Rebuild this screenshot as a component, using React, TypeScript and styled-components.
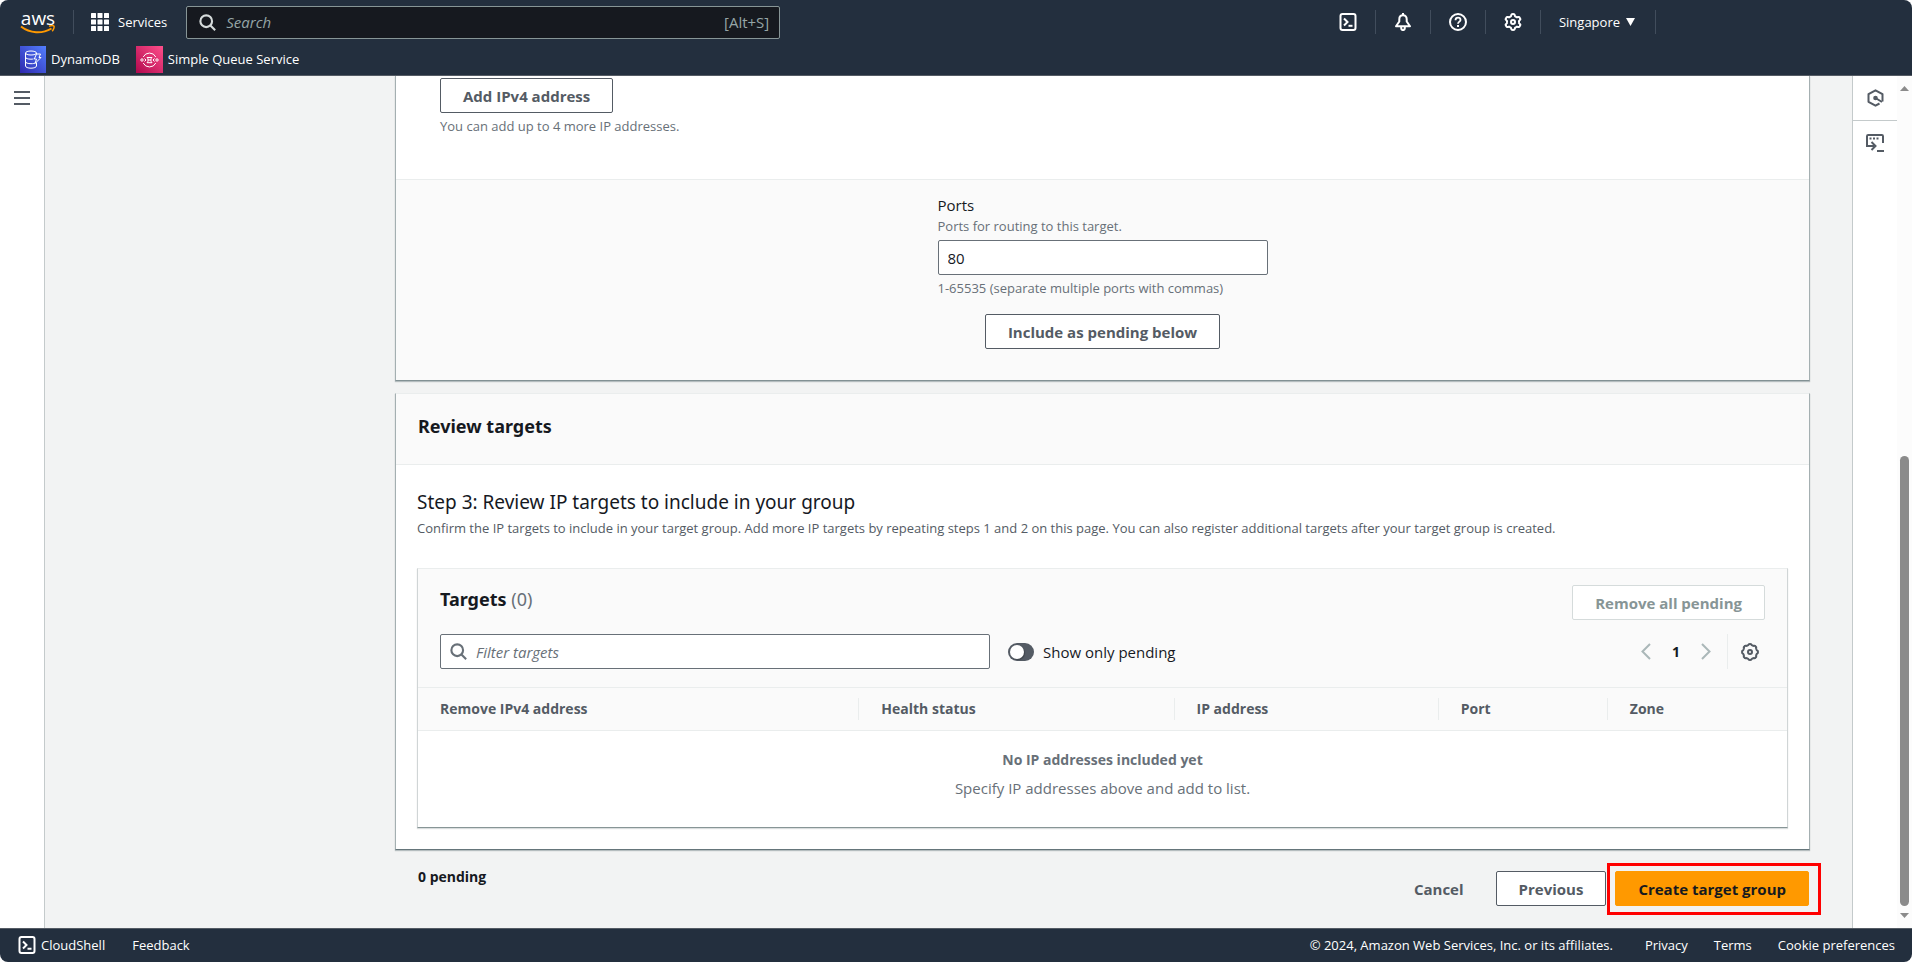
import React, { useState } from "react";
import styled, { createGlobalStyle, css } from "styled-components";

const color = {
  nav: "#232f3e",
  navBorder: "#545b64",
  page: "#f2f3f3",
  panel: "#ffffff",
  shade: "#fafafa",
  line: "#eaeded",
  edge: "#c4cacb",
  text: "#16191f",
  label: "#545b64",
  hint: "#687078",
  muted: "#879596",
  disabled: "#aab7b8",
  accent: "#ff9900",
  mark: "#ff0000",
};

const GlobalStyle = createGlobalStyle`
  *, *::before, *::after { box-sizing: border-box; }
  body {
    margin: 0;
    background: #ffffff;
    color: ${color.text};
    font-family: "Open Sans", "Noto Sans", sans-serif;
    font-size: 15px;
    line-height: 22px;
  }
  button, input { font: inherit; color: inherit; }
  h1, h2, h3, p { margin: 0; }
`;

const Shell = styled.div`
  display: flex;
  flex-direction: column;
  min-height: 100vh;
  border-radius: 8px;
  overflow: hidden;
`;

/* ---------- top navigation ---------- */

const Header = styled.header`
  background: ${color.nav};
  border-bottom: 1px solid ${color.navBorder};
  color: #ffffff;
  font-size: 13px;
  font-weight: 500;
  line-height: 18px;
`;

const NavRow = styled.nav`
  display: flex;
  align-items: center;
  height: 44px;
  padding-left: 20px;
`;

const Divider = styled.span<{ $gap?: number }>`
  width: 1px;
  height: 24px;
  margin: 0 ${(p) => p.$gap ?? 0}px;
  background: #414d5c;
`;

const NavLink = styled.a`
  display: flex;
  align-items: center;
  color: #ffffff;
  text-decoration: none;
  white-space: nowrap;
`;

const NavButton = styled.button`
  display: flex;
  align-items: center;
  gap: 9px;
  padding: 0;
  border: 0;
  background: none;
  color: #ffffff;
  cursor: pointer;
  white-space: nowrap;
`;

const IconButton = styled(NavButton)`
  justify-content: center;
  width: 54px;
  height: 36px;
`;

const SearchBox = styled.label`
  display: flex;
  align-items: center;
  gap: 10px;
  flex: 0 1 594px;
  height: 33px;
  margin-left: 19px;
  padding: 0 10px 0 12px;
  border: 1px solid ${color.muted};
  border-radius: 2px;
  background: #16191f;
  color: #95a5a6;
  font-weight: 400;
`;

const SearchGlyph = styled.svg<{ $light?: boolean }>`
  flex: none;
  color: ${(p) => (p.$light ? "#d5dbdb" : color.hint)};
`;

const BareInput = styled.input`
  flex: 1;
  min-width: 0;
  padding: 0;
  border: 0;
  outline: 0;
  background: none;
  font-size: 15px;
  &::placeholder {
    color: ${color.hint};
    font-style: italic;
    opacity: 1;
  }
`;

const NavInput = styled(BareInput)`
  &::placeholder { color: #95a5a6; }
`;

const Shortcut = styled.span`
  font-size: 15px;
`;

const NavTools = styled.div`
  display: flex;
  align-items: center;
  margin-left: auto;
  padding-right: 256px;
`;

const Region = styled(NavButton)`
  gap: 6px;
  padding: 0 20px 0 18px;
`;

const Favorites = styled.nav`
  display: flex;
  align-items: center;
  gap: 16px;
  height: 31px;
  padding: 0 20px 1px;
`;

const Favorite = styled(NavLink)`
  gap: 5px;
`;

/* ---------- frame ---------- */

const Body = styled.div`
  display: flex;
  flex: 1;
`;

const SideRail = styled.aside<{ $side: "left" | "right" }>`
  flex: none;
  width: 45px;
  background: ${color.panel};
  border: 0 solid ${color.edge};
  ${(p) => (p.$side === "left" ? "border-right-width: 1px;" : "border-left-width: 1px;")}
`;

const RailButton = styled.button`
  display: flex;
  align-items: center;
  justify-content: center;
  width: 100%;
  height: 44px;
  padding: 0;
  border: 0;
  background: none;
  color: ${color.label};
  cursor: pointer;
  & + & { border-top: 1px solid ${color.edge}; }
`;

const ScrollTrack = styled.div`
  display: flex;
  flex: none;
  flex-direction: column;
  align-items: center;
  gap: 7px;
  width: 15px;
  padding: 10px 0;
  background: #fcfcfc;
  color: #8b8b8b;
`;

const ScrollRun = styled.div`
  flex: 1;
  display: flex;
  flex-direction: column;
`;

const ScrollSpace = styled.div`
  flex: 358;
`;

const ScrollThumb = styled.div`
  flex: 449;
  width: 9px;
  border-radius: 5px;
  background: #8b8b8b;
`;

const Content = styled.main`
  flex: 1;
  min-width: 0;
  padding: 0 42px 21px 350px;
  background: ${color.page};
`;

/* ---------- cards ---------- */

const Card = styled.section`
  background: ${color.panel};
  border: 1px solid #a4afb1;
  border-top-color: ${color.line};
  border-bottom-color: #65757a;
  box-shadow: 0 1px 1px rgba(0, 28, 36, 0.25);
  & + & { margin-top: 12px; }
`;

const OpenCard = styled(Card)`
  border-top: 0;
  border-bottom-color: #829194;
`;

const AddressSection = styled.div`
  display: flex;
  flex-direction: column;
  align-items: flex-start;
  padding: 2px 44px 43px;
`;

const PortSection = styled.div`
  display: flex;
  flex-direction: column;
  align-items: center;
  gap: 16px;
  padding: 14px 0 31px;
  border-top: 1px solid ${color.line};
  background: ${color.shade};
`;

const Field = styled.div`
  display: flex;
  flex-direction: column;
  width: 330px;
`;

const FieldLabel = styled.label`
  line-height: 22px;
`;

const Hint = styled.p`
  color: ${color.hint};
  font-size: 13px;
  line-height: 20px;
`;

const HintAfter = styled(Hint)`
  margin-top: 3px;
`;

const TextInput = styled.input`
  width: 100%;
  height: 35px;
  margin-top: 4px;
  padding: 0 9px;
  border: 1px solid ${color.hint};
  border-radius: 2px;
  background: ${color.panel};
`;

const Button = styled.button<{ $kind?: "normal" | "primary" | "link" }>`
  height: 35px;
  padding: 0 22px;
  border: 1px solid ${color.label};
  border-radius: 2px;
  background: ${color.panel};
  color: ${color.label};
  font-weight: 700;
  line-height: 20px;
  white-space: nowrap;
  cursor: pointer;
  &:disabled {
    border-color: #d5dbdb;
    color: ${color.muted};
    cursor: default;
  }
  ${(p) =>
    p.$kind === "primary" &&
    css`
      border-color: ${color.accent};
      background: ${color.accent};
      color: ${color.text};
    `}
  ${(p) =>
    p.$kind === "link" &&
    css`
      border-color: transparent;
      background: none;
    `}
`;

const CardHeader = styled.div`
  padding: 18px 22px 24px;
  border-bottom: 1px solid ${color.line};
  background: ${color.shade};
`;

const Heading = styled.h2`
  font-family: "Noto Sans", "Open Sans", sans-serif;
  font-size: 18px;
  font-weight: 700;
  line-height: 28px;
`;

const StepHeading = styled.h3`
  font-family: "Noto Sans", "Open Sans", sans-serif;
  font-size: 19px;
  font-weight: 400;
  line-height: 28px;
`;

const StepText = styled.p`
  margin-top: 2px;
  color: ${color.label};
  font-size: 13px;
  line-height: 20px;
`;

const CardBody = styled.div`
  padding: 23px 21px 21px;
`;

/* ---------- targets table ---------- */

const TablePanel = styled.section`
  margin-top: 30px;
  border: 1px solid #d0d5d6;
  border-top-color: ${color.line};
  border-bottom-color: ${color.muted};
  box-shadow: 0 1px 1px rgba(0, 28, 36, 0.15);
`;

const TableTop = styled.div`
  display: grid;
  gap: 14px;
  padding: 16px 22px 18px;
  background: ${color.shade};
`;

const Row = styled.div`
  display: flex;
  align-items: center;
  justify-content: space-between;
`;

const TitleRow = styled(Row)`
  align-items: flex-start;
`;

const Count = styled.span`
  color: ${color.hint};
  font-weight: 400;
`;

const Filters = styled.div`
  display: flex;
  flex: 1;
  align-items: center;
  gap: 18px;
`;

const FilterBox = styled.label`
  display: flex;
  align-items: center;
  gap: 9px;
  flex: 0 1 550px;
  height: 35px;
  padding: 0 9px;
  border: 1px solid ${color.hint};
  border-radius: 2px;
  background: ${color.panel};
  color: ${color.text};
`;

const ToggleLabel = styled.label`
  display: flex;
  align-items: center;
  gap: 9px;
  white-space: nowrap;
`;

const Toggle = styled.input`
  appearance: none;
  display: flex;
  align-items: center;
  width: 26px;
  height: 18px;
  margin: 0;
  padding: 0 2px;
  border-radius: 9px;
  background: ${color.label};
  &::before {
    content: "";
    width: 14px;
    height: 14px;
    border-radius: 50%;
    background: #ffffff;
    box-shadow: 1px 1px 1px rgba(0, 0, 0, 0.25);
  }
  &:checked { justify-content: flex-end; background: #0073bb; }
`;

const Pager = styled.div`
  display: flex;
  align-items: center;
  height: 35px;
  font-size: 14px;
  font-weight: 700;
`;

const PagerButton = styled.button`
  display: flex;
  align-items: center;
  justify-content: center;
  width: 30px;
  height: 35px;
  padding: 0;
  border: 0;
  background: none;
  color: ${color.label};
  &:disabled { color: ${color.disabled}; }
`;

const PageNumber = styled.span`
  width: 30px;
  text-align: center;
`;

const PagerLine = styled.span`
  width: 1px;
  height: 35px;
  margin: 0 7px 0 6px;
  background: ${color.line};
`;

const Table = styled.table`
  width: 100%;
  table-layout: fixed;
  border-collapse: separate;
  border-spacing: 0;
`;

const HeadCell = styled.th<{ $width: number }>`
  width: ${(p) => p.$width}px;
  padding: 10px 0;
  border: 1px solid ${color.line};
  border-width: 1px 0;
  background: ${color.shade};
  color: ${color.label};
  font-size: 14px;
  font-weight: 700;
  line-height: 22px;
  text-align: left;
`;

const HeadText = styled.span<{ $last: boolean }>`
  display: block;
  padding-left: 22px;
  border-right: ${(p) => (p.$last ? "0" : `1px solid ${color.line}`)};
`;

const EmptyCell = styled.td`
  padding: 18px 0 28px;
  color: ${color.hint};
  text-align: center;
`;

const EmptyTitle = styled.p`
  margin-bottom: 6px;
  font-size: 14px;
  font-weight: 700;
`;

/* ---------- page actions ---------- */

const Actions = styled.div`
  display: flex;
  justify-content: space-between;
  align-items: flex-start;
  padding: 13px 1px 0 23px;
`;

const Pending = styled.p`
  margin-top: 3px;
  font-size: 14px;
  font-weight: 700;
`;

const ActionButtons = styled.div`
  display: flex;
  align-items: center;
  gap: 9px;
  padding-top: 8px;
`;

const Marked = styled.div`
  position: relative;
  &::after {
    content: "";
    position: absolute;
    inset: -8px -12px -9px -8px;
    border: 3px solid ${color.mark};
    pointer-events: none;
  }
`;

/* ---------- footer ---------- */

const Footer = styled.footer`
  display: flex;
  align-items: center;
  justify-content: space-between;
  height: 34px;
  padding: 0 17px 1px 18px;
  border-top: 1px solid ${color.navBorder};
  background: ${color.nav};
  color: #ffffff;
  font-size: 13px;
  font-weight: 500;
  line-height: 18px;
`;

const FooterGroup = styled.div`
  display: flex;
  align-items: center;
  gap: 27px;
`;

const LegalGroup = styled(FooterGroup)`
  gap: 26px;
`;

const Copyright = styled.span`
  margin-right: 6px;
`;

const ShellButton = styled(NavButton)`
  gap: 5px;
`;

/* ---------- drawings ---------- */

const AwsWord = styled.span`
  display: flex;
  flex-direction: column;
  align-items: center;
  width: 36px;
  font-size: 19px;
  font-weight: 500;
  line-height: 14px;
`;

const AwsLogo = () => (
  <AwsWord>
    aws
    <svg width="36" height="9" viewBox="0 0 36 9" fill="none" stroke="#ff9900" aria-hidden="true">
      <path d="M1 1.5C10 8.5 22 9 31.5 3.5" strokeWidth="2" />
      <path d="M29 1.2c2-.6 4.5-.7 5 0s-.3 3.4-1.8 5" strokeWidth="1.5" />
    </svg>
  </AwsWord>
);

const GridIcon = () => (
  <svg width="18" height="18" viewBox="0 0 18 18" fill="currentColor" aria-hidden="true">
    {[0, 6.5, 13].map((y) => [0, 6.5, 13].map((x) => <rect key={`${x}-${y}`} x={x} y={y} width="5" height="5" rx="0.5" />))}
  </svg>
);

const SearchIcon = ({ light }: { light?: boolean }) => (
  <SearchGlyph $light={light} width="17" height="17" viewBox="0 0 16 16" fill="none" stroke="currentColor" strokeWidth="2" aria-hidden="true">
    <circle cx="6.8" cy="6.8" r="5.5" />
    <path d="m10.8 10.8 4.4 4.4" />
  </SearchGlyph>
);

const ShellIcon = () => (
  <svg width="18" height="18" viewBox="0 0 18 18" fill="none" stroke="currentColor" strokeWidth="2" aria-hidden="true">
    <rect x="1.5" y="1" width="15" height="16" rx="2" />
    <path d="m5 5.5 3.5 3.5L5 12.5" />
    <path d="M9.5 12.8h4" />
  </svg>
);

const BellIcon = () => (
  <svg width="18" height="18" viewBox="0 0 18 18" fill="none" stroke="currentColor" strokeWidth="2" strokeLinejoin="round" aria-hidden="true">
    <path d="M9 2.2c-2.500 0-3.700 1.700-3.700 4v2.300L2 13.300h14l-3.300-4.800V6.200c0-2.300-1.200-4-3.700-4Z" />
    <path d="M9 0v2M7.200 14v1.300a1.800 1.800 0 0 0 3.600 0V14" />
  </svg>
);

const HelpIcon = () => (
  <svg width="18" height="18" viewBox="0 0 18 18" fill="none" stroke="currentColor" strokeWidth="2" aria-hidden="true">
    <circle cx="9" cy="9" r="8" />
    <path d="M6.5 7.2C6.5 5.6 7.6 4.7 9 4.7s2.5.9 2.5 2.200c0 1.600-2.500 1.900-2.500 3.900" strokeWidth="1.8" />
    <path d="M8 12h2v2H8z" fill="currentColor" stroke="none" />
  </svg>
);

/* Cog outline: rounded lobes spaced evenly round a ring. */
const cogPath = (lobes: number, outer: number, inner: number) => {
  const steps = 120;
  const points: string[] = [];
  for (let i = 0; i < steps; i++) {
    const a = (i / steps) * Math.PI * 2;
    const wave = Math.max(-1, Math.min(1, Math.cos(a * lobes) * 1.8));
    const r = (outer + inner) / 2 + (wave * (outer - inner)) / 2;
    points.push(`${(9 + r * Math.sin(a)).toFixed(2)} ${(9 - r * Math.cos(a)).toFixed(2)}`);
  }
  return `M${points.join("L")}Z`;
};

const CogIcon = ({ lobes, inner }: { lobes: number; inner: number }) => (
  <svg width="18" height="18" viewBox="0 0 18 18" fill="none" stroke="currentColor" strokeWidth="2" strokeLinejoin="round" aria-hidden="true">
    <path d={cogPath(lobes, 7.9, inner)} />
    <circle cx="9" cy="9" r="2" />
  </svg>
);

const MenuIcon = () => (
  <svg width="16" height="14" viewBox="0 0 16 14" fill="currentColor" aria-hidden="true">
    <path d="M0 0h16v2H0zM0 6h16v2H0zM0 12h16v2H0z" />
  </svg>
);

const HexIcon = () => (
  <svg width="17" height="18" viewBox="0 0 17 18" fill="none" stroke="currentColor" strokeWidth="2" aria-hidden="true">
    <path d="M15.5 12.5V5.2L8.5 1.3 1.5 5.2v7.600l7 3.900 4-2.200" strokeLinejoin="round" />
    <circle cx="8.5" cy="9" r="2.3" fill="currentColor" stroke="none" />
    <path d="m8.5 9 6.5 4" />
  </svg>
);

const TerminalIcon = () => (
  <svg width="18" height="18" viewBox="0 0 18 18" fill="none" stroke="currentColor" strokeWidth="2" aria-hidden="true">
    <path d="M17 9V2.2C17 1.5 16.5 1 15.8 1H2.2C1.5 1 1 1.5 1 2.2V12h7" />
    <path d="M3.5 4.5h9" strokeDasharray="2 1.5" />
    <path d="m5.5 8 4 4-4 4M11 17h7" />
  </svg>
);

const Chevron = ({ d }: { d: string }) => (
  <svg width="10" height="17" viewBox="0 0 10 17" fill="none" stroke="currentColor" strokeWidth="2" aria-hidden="true">
    <path d={d} />
  </svg>
);

const Triangle = ({ d, width, height }: { d: string; width: number; height: number }) => (
  <svg width={width} height={height} viewBox={`0 0 ${width} ${height}`} fill="currentColor" aria-hidden="true">
    <path d={d} />
  </svg>
);

const DynamoIcon = () => (
  <svg width="26" height="27" viewBox="0 0 26 27" fill="none" stroke="#ffffff" aria-hidden="true">
    <defs>
      <linearGradient id="dynamo" x1="0" y1="1" x2="1" y2="0">
        <stop offset="0" stopColor="#2e27ad" />
        <stop offset="1" stopColor="#527fff" />
      </linearGradient>
    </defs>
    <rect width="26" height="27" fill="url(#dynamo)" stroke="none" />
    <ellipse cx="11" cy="7" rx="5.5" ry="2" />
    <path d="M5.5 7v13c0 1.2 2.5 2.2 5.5 2.2s5.5-1 5.5-2.2v-3.5M5.5 11.2c0 1.2 2.5 2 5.5 2 .9 0 1.8-.1 2.5-.3M5.5 15.7c0 1.2 2.5 2 5.5 2 2 0 3.8-.3 4.7-1M16.5 7v1" />
    <path d="M16.5 8h4l-1.5 3.5h2L15 17.5l1.5-4.5h-2.2z" strokeLinejoin="round" />
  </svg>
);

const QueueIcon = () => (
  <svg width="27" height="27" viewBox="0 0 27 27" fill="none" stroke="#ffffff" aria-hidden="true">
    <defs>
      <linearGradient id="queue" x1="0" y1="1" x2="1" y2="0">
        <stop offset="0" stopColor="#b0084d" />
        <stop offset="1" stopColor="#ff4f8b" />
      </linearGradient>
    </defs>
    <rect width="27" height="27" fill="url(#queue)" stroke="none" />
    <path d="M7.2 11A7 7 0 0 1 19.8 11M7.2 17A7 7 0 0 0 19.8 17" />
    <path d="M11 11.5c1.5 1 1.5 4 0 5.2M16 11.5c-1.5 1-1.5 4 0 5.2M11 11.5h5M11 16.7h5M12 14h3" />
    <circle cx="6" cy="14" r="1.2" />
    <circle cx="21" cy="14" r="1.2" />
    <path d="M8.5 12.5 10 14l-1.5 1.5M18.5 12.5 17 14l1.5 1.5" />
  </svg>
);

/* ---------- data ---------- */

const columns = [
  { title: "Remove IPv4 address", width: 441 },
  { title: "Health status", width: 315 },
  { title: "IP address", width: 264 },
  { title: "Port", width: 169 },
  { title: "Zone", width: 179 },
];

export default function App() {
  const [ports, setPorts] = useState("80");
  const [onlyPending, setOnlyPending] = useState(false);

  return (
    <>
      <GlobalStyle />
      <Shell>
        <Header>
          <NavRow>
            <NavLink href="#home" aria-label="AWS home"><AwsLogo /></NavLink>
            <Divider $gap={17} />
            <NavButton type="button"><GridIcon />Services</NavButton>
            <SearchBox>
              <SearchIcon light />
              <NavInput type="search" placeholder="Search" aria-label="Search" />
              <Shortcut>[Alt+S]</Shortcut>
            </SearchBox>
            <NavTools>
              <IconButton type="button" aria-label="CloudShell"><ShellIcon /></IconButton>
              <Divider />
              <IconButton type="button" aria-label="Notifications"><BellIcon /></IconButton>
              <Divider />
              <IconButton type="button" aria-label="Help"><HelpIcon /></IconButton>
              <Divider />
              <IconButton type="button" aria-label="Settings"><CogIcon lobes={6} inner={6} /></IconButton>
              <Divider />
              <Region type="button">Singapore <Triangle width={9} height={8} d="M0 0h9L4.5 8z" /></Region>
              <Divider />
            </NavTools>
          </NavRow>
          <Favorites>
            <Favorite href="#dynamodb"><DynamoIcon />DynamoDB</Favorite>
            <Favorite href="#sqs"><QueueIcon />Simple Queue Service</Favorite>
          </Favorites>
        </Header>

        <Body>
          <SideRail $side="left">
            <RailButton type="button" aria-label="Open navigation"><MenuIcon /></RailButton>
          </SideRail>

          <Content>
            <OpenCard>
              <AddressSection>
                <Button type="button">Add IPv4 address</Button>
                <HintAfter>You can add up to 4 more IP addresses.</HintAfter>
              </AddressSection>
              <PortSection>
                <Field>
                  <FieldLabel htmlFor="ports">Ports</FieldLabel>
                  <Hint>Ports for routing to this target.</Hint>
                  <TextInput id="ports" value={ports} onChange={(e) => setPorts(e.target.value)} />
                  <HintAfter>1-65535 (separate multiple ports with commas)</HintAfter>
                </Field>
                <Button type="button">Include as pending below</Button>
              </PortSection>
            </OpenCard>

            <Card>
              <CardHeader>
                <Heading>Review targets</Heading>
              </CardHeader>
              <CardBody>
                <StepHeading>Step 3: Review IP targets to include in your group</StepHeading>
                <StepText>
                  Confirm the IP targets to include in your target group. Add more IP targets by repeating steps 1 and 2 on this
                  page. You can also register additional targets after your target group is created.
                </StepText>
                <TablePanel>
                  <TableTop>
                    <TitleRow>
                      <Heading>Targets <Count>(0)</Count></Heading>
                      <Button type="button" disabled>Remove all pending</Button>
                    </TitleRow>
                    <Row>
                      <Filters>
                        <FilterBox>
                          <SearchIcon />
                          <BareInput type="search" placeholder="Filter targets" aria-label="Filter targets" />
                        </FilterBox>
                        <ToggleLabel>
                          <Toggle
                            type="checkbox"
                            role="switch"
                            checked={onlyPending}
                            onChange={(e) => setOnlyPending(e.target.checked)}
                          />
                          Show only pending
                        </ToggleLabel>
                      </Filters>
                      <Pager>
                        <PagerButton type="button" disabled aria-label="Previous page"><Chevron d="M9 1 1.5 8.5 9 16" /></PagerButton>
                        <PageNumber>1</PageNumber>
                        <PagerButton type="button" disabled aria-label="Next page"><Chevron d="M1 1l7.5 7.5L1 16" /></PagerButton>
                        <PagerLine />
                        <PagerButton type="button" aria-label="Preferences"><CogIcon lobes={8} inner={7} /></PagerButton>
                      </Pager>
                    </Row>
                  </TableTop>
                  <Table>
                    <thead>
                      <tr>
                        {columns.map((c, i) => (
                          <HeadCell key={c.title} $width={c.width} scope="col">
                            <HeadText $last={i === columns.length - 1}>{c.title}</HeadText>
                          </HeadCell>
                        ))}
                      </tr>
                    </thead>
                    <tbody>
                      <tr>
                        <EmptyCell colSpan={columns.length}>
                          <EmptyTitle>No IP addresses included yet</EmptyTitle>
                          <p>Specify IP addresses above and add to list.</p>
                        </EmptyCell>
                      </tr>
                    </tbody>
                  </Table>
                </TablePanel>
              </CardBody>
            </Card>

            <Actions>
              <Pending>0 pending</Pending>
              <ActionButtons>
                <Button type="button" $kind="link">Cancel</Button>
                <Button type="button">Previous</Button>
                <Marked>
                  <Button type="button" $kind="primary">Create target group</Button>
                </Marked>
              </ActionButtons>
            </Actions>
          </Content>

          <SideRail $side="right">
            <RailButton type="button" aria-label="Tutorials"><HexIcon /></RailButton>
            <RailButton type="button" aria-label="Command panel"><TerminalIcon /></RailButton>
          </SideRail>
          <ScrollTrack aria-hidden="true">
            <Triangle width={9} height={5} d="M0 5h9L4.5 0z" />
            <ScrollRun>
              <ScrollSpace />
              <ScrollThumb />
            </ScrollRun>
            <Triangle width={9} height={5} d="M0 0h9L4.5 5z" />
          </ScrollTrack>
        </Body>

        <Footer>
          <FooterGroup>
            <ShellButton type="button"><ShellIcon />CloudShell</ShellButton>
            <NavLink href="#feedback">Feedback</NavLink>
          </FooterGroup>
          <LegalGroup>
            <Copyright>© 2024, Amazon Web Services, Inc. or its affiliates.</Copyright>
            <NavLink href="#privacy">Privacy</NavLink>
            <NavLink href="#terms">Terms</NavLink>
            <NavLink href="#cookies">Cookie preferences</NavLink>
          </LegalGroup>
        </Footer>
      </Shell>
    </>
  );
}
